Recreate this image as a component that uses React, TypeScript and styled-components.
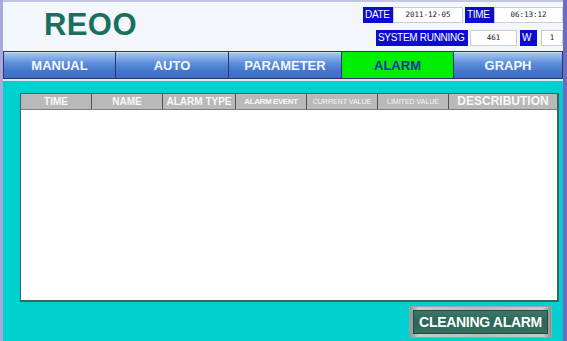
import React from "react";
import styled, { createGlobalStyle } from "styled-components";

const Global = createGlobalStyle`
  html, body { margin: 0; padding: 0; background: #00d0d0; }
  body { width: 567px; height: 341px; overflow: hidden; font-family: "Liberation Sans", Arial, sans-serif; }
  * { box-sizing: border-box; }
`;

const Frame = styled.div`
  width: 567px;
  height: 341px;
  display: flex;
  flex-direction: column;
  border-left: 3px solid #a9a9dc;
  border-right: 4px solid #6c6cc0;
  background: #00d0d0;
`;

const Header = styled.header`
  height: 51px;
  flex: none;
  display: flex;
  justify-content: space-between;
  background: #f3f7fc;
  border-top: 2px solid #c4c4ea;
  padding: 5px 0 0 0;
`;

const Logo = styled.div`
  font-family: "Liberation Sans", Arial, sans-serif;
  font-weight: bold;
  font-size: 31px;
  color: #1b6f5e;
  padding: 1px 0 0 41px;
  letter-spacing: 0.4px;
  line-height: 34px;
`;

const Status = styled.div`
  display: flex;
  flex-direction: column;
  align-items: flex-end;
  gap: 7px;
`;

const StatusRow = styled.div`
  display: flex;
  align-items: center;
`;

const Label = styled.div<{ $w: number; $ml?: number }>`
  width: ${(p) => p.$w}px;
  margin-left: ${(p) => p.$ml ?? 0}px;
  height: 16px;
  background: #0b0bd4;
  color: #ffffff;
  font-family: "Liberation Sans", Arial, sans-serif;
  font-size: 10px;
  line-height: 16px;
  padding-left: 2px;
  letter-spacing: -0.3px;
  white-space: nowrap;
`;

const Value = styled.div<{ $w: number; $ml?: number }>`
  width: ${(p) => p.$w}px;
  margin-left: ${(p) => p.$ml ?? 0}px;
  height: 16px;
  background: #ffffff;
  border: 1px solid #c8ccd4;
  color: #222;
  font-family: "DejaVu Sans Mono", "Liberation Mono", monospace;
  font-size: 7.5px;
  line-height: 14px;
  text-align: center;
`;

const Nav = styled.nav`
  height: 28px;
  flex: none;
  display: grid;
  grid-template-columns: 111px 112px 112px 111px 1fr;
  background: #2e3270;
  border: 1px solid #2e3270;
  gap: 1px;
`;

const Tab = styled.div<{ $active?: boolean }>`
  display: flex;
  align-items: center;
  justify-content: center;
  font-family: "Liberation Sans", Arial, sans-serif;
  font-weight: bold;
  font-size: 13px;
  color: ${(p) => (p.$active ? "#1232a6" : "#f4f8ff")};
  background: ${(p) =>
    p.$active
      ? "#00ee00"
      : "linear-gradient(to bottom, #a4c4f0 0%, #86aee8 18%, #5c8fdc 40%, #4677cc 70%, #3d6cc2 100%)"};
  border-top: 1px solid ${(p) => (p.$active ? "#00ee00" : "#c8dcf6")};
`;

const Rule = styled.div`
  height: 2px;
  flex: none;
  background: #dfe8ec;
`;

const Main = styled.main`
  flex: 1;
  display: flex;
  flex-direction: column;
  align-items: flex-start;
  padding: 12px 5px 0 17px;
  background: #00d0d0;
`;

const Table = styled.div`
  width: 539px;
  height: 209px;
  background: #ffffff;
  border: 1px solid #3a6468;
  border-right-width: 2px;
  border-bottom-width: 2px;
  display: flex;
  flex-direction: column;
`;

const HeadRow = styled.div`
  height: 16px;
  display: grid;
  grid-template-columns: 70px 70px 72px 70px 70px 70px 1fr;
  background: #505050;
  gap: 1px;
  border-bottom: 1px solid #7c7c7c;
`;

type Kind = "bold" | "cond" | "small" | "big";

const HeadCell = styled.div<{ $kind: Kind }>`
  background: #b9b9b9;
  color: #f8f8f8;
  display: flex;
  align-items: center;
  justify-content: center;
  font-family: "Liberation Sans", Arial, sans-serif;
  white-space: nowrap;
  font-weight: ${(p) => (p.$kind === "small" ? "normal" : "bold")};
  font-size: ${(p) =>
    p.$kind === "big" ? "12px" : p.$kind === "cond" ? "8px" : p.$kind === "small" ? "7px" : "10px"};
  letter-spacing: ${(p) => (p.$kind === "cond" ? "-0.4px" : "0")};
  line-height: 15px;
`;

const Body = styled.div`
  flex: 1;
`;

const Footer = styled.div`
  align-self: stretch;
  display: flex;
  justify-content: flex-end;
  padding: 4px 6px 0 0;
`;

const CleanButton = styled.button`
  width: 143px;
  height: 32px;
  padding: 3px;
  border: 1px solid #9aa4a4;
  background: linear-gradient(to right, #8c9494 0%, #c8cccc 6%, #b8bcbc 50%, #c8cccc 94%, #8a9090 100%);
  cursor: pointer;
`;

const ButtonFace = styled.span`
  display: flex;
  align-items: center;
  justify-content: center;
  height: 100%;
  background: linear-gradient(to bottom, #3a7868 0%, #2c6656 50%, #356f60 100%);
  border: 1px solid #1e4a40;
  color: #ffffff;
  font-family: "Liberation Sans", Arial, sans-serif;
  font-weight: bold;
  font-size: 14px;
  letter-spacing: -0.3px;
  white-space: nowrap;
`;

const columns: { label: string; kind: Kind }[] = [
  { label: "TIME", kind: "bold" },
  { label: "NAME", kind: "bold" },
  { label: "ALARM TYPE", kind: "bold" },
  { label: "ALARM EVENT", kind: "cond" },
  { label: "CURRENT VALUE", kind: "small" },
  { label: "LIMITED VALUE", kind: "small" },
  { label: "DESCRIBUTION", kind: "big" },
];

const tabs = ["MANUAL", "AUTO", "PARAMETER", "ALARM", "GRAPH"];

export default function App() {
  return (
    <>
      <Global />
      <Frame>
        <Header>
          <Logo>REOO</Logo>
          <Status>
            <StatusRow>
              <Label $w={30}>DATE</Label>
              <Value $w={70}>2011-12-05</Value>
              <Label $w={29} $ml={2}>TIME</Label>
              <Value $w={69}>06:13:12</Value>
            </StatusRow>
            <StatusRow>
              <Label $w={92}>SYSTEM RUNNING</Label>
              <Value $w={47} $ml={2}>461</Value>
              <Label $w={17} $ml={3}>W</Label>
              <Value $w={22} $ml={4}>1</Value>
            </StatusRow>
          </Status>
        </Header>
        <Nav>
          {tabs.map((t) => (
            <Tab key={t} $active={t === "ALARM"}>
              {t}
            </Tab>
          ))}
        </Nav>
        <Rule />
        <Main>
          <Table>
            <HeadRow>
              {columns.map((c) => (
                <HeadCell key={c.label} $kind={c.kind}>
                  {c.label}
                </HeadCell>
              ))}
            </HeadRow>
            <Body />
          </Table>
          <Footer>
            <CleanButton>
              <ButtonFace>CLEANING ALARM</ButtonFace>
            </CleanButton>
          </Footer>
        </Main>
      </Frame>
    </>
  );
}
